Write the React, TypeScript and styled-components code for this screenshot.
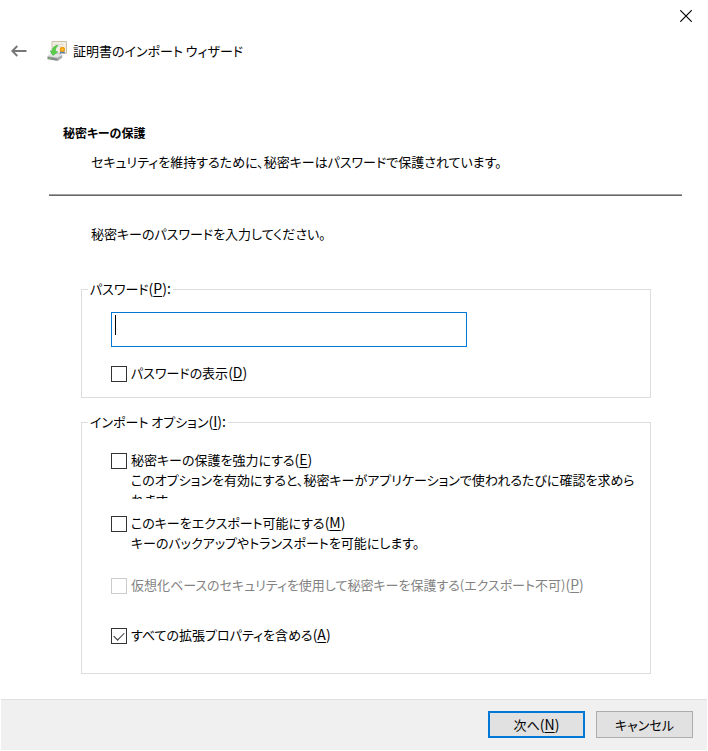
import React, { useState } from "react";
import styled, { createGlobalStyle } from "styled-components";

const GlobalStyle = createGlobalStyle`
  *, *::before, *::after { box-sizing: border-box; }
  body {
    margin: 0;
    background: #fff;
    color: #000;
    font: 13px/20px "Noto Sans CJK JP", sans-serif;
    font-feature-settings: "palt";
  }
  button, input { font: inherit; font-feature-settings: inherit; color: inherit; }
`;

const Wizard = styled.div`
  display: flex;
  flex-direction: column;
  min-height: 100vh;
  padding: 0 1px 1px;
`;

const TitleBar = styled.div`
  display: flex;
  justify-content: flex-end;
  height: 32px;
`;

const IconButton = styled.button<{ $width: number }>`
  display: flex;
  align-items: center;
  justify-content: center;
  width: ${(p) => p.$width}px;
  height: 32px;
  padding: 0;
  border: 0;
  background: none;
`;

const Header = styled.header`
  display: flex;
  align-items: center;
  height: 38px;
  padding-left: 2px;
`;

const Title = styled.h1`
  margin: 0 0 0 6px;
  font-size: 13px;
  font-weight: 400;
`;

const WizardIcon = styled.svg`
  margin-left: 13px;
`;

const Main = styled.main`
  flex: 1;
  padding: 53px 25px 25px 48px;
`;

const Intro = styled.div`
  padding: 0 0 22px 14px;
  border-bottom: 1px solid #a0a0a0;
  box-shadow: 0 1px #696969;
`;

const Heading = styled.h2`
  margin: 0 0 9px;
  font-size: 12px;
  font-weight: 700;
`;

const Text = styled.p<{ $indent: number }>`
  margin: 0;
  padding-left: ${(p) => p.$indent}px;
`;

const Body = styled.div`
  padding: 29px 31px 0 32px;
`;

const Group = styled.fieldset<{ $gap: number; $top: number; $bottom: number }>`
  min-width: 0;
  margin: ${(p) => p.$gap}px 0 0;
  padding: ${(p) => p.$top}px 13px ${(p) => p.$bottom}px 29px;
  border: 1px solid #dcdcdc;
`;

const Legend = styled.legend`
  margin-left: -23px;
  padding: 0 2px;
`;

const PasswordBox = styled.div`
  position: relative;
  max-width: 356px;
  height: 35px;
  margin-bottom: 16px;
`;

const PasswordInput = styled.input`
  display: block;
  width: 100%;
  height: 35px;
  padding: 2px 6px;
  border: 1px solid #0078d7;
  border-radius: 0;
  background: #fff;
  outline: 0;
  caret-color: transparent;
`;

const Caret = styled.span`
  position: absolute;
  left: 4px;
  top: 3px;
  width: 1px;
  height: 20px;
  background: #000;
`;

const Option = styled.div<{ $gap?: number }>`
  margin-top: ${(p) => p.$gap ?? 0}px;
`;

const OptionLabel = styled.label<{ $disabled?: boolean }>`
  display: flex;
  align-items: center;
  gap: 4px;
  height: 20px;
  color: ${(p) => (p.$disabled ? "#838383" : "#000")};
`;

const Checkbox = styled.input`
  appearance: none;
  display: grid;
  place-items: center;
  flex: none;
  width: 16px;
  height: 16px;
  margin: 2px 0 0;
  border: 1px solid #333;
  background: #fff;

  &:disabled { border-color: #ccc; }
  &:checked::before {
    content: "";
    width: 10px;
    height: 6px;
    margin-top: -3px;
    border: solid #333;
    border-width: 0 0 1px 1px;
    transform: rotate(-45deg);
  }
`;

const Description = styled.p<{ $clipped?: boolean }>`
  margin: 0;
  padding-left: 20px;
  max-height: ${(p) => (p.$clipped ? "29px" : "none")};
  overflow: hidden;
`;

const Footer = styled.footer`
  display: flex;
  justify-content: flex-end;
  gap: 11px;
  padding: 11px 14px 12px;
  border-top: 1px solid #dfdfdf;
  background: #f0f0f0;
`;

const FooterButton = styled.button<{ $primary?: boolean }>`
  width: 97px;
  height: 27px;
  padding: 0;
  border: ${(p) => (p.$primary ? "2px solid #0078d7" : "1px solid #adadad")};
  background: #e1e1e1;
  line-height: 20px;
`;

const KeyHint = styled.span`
  font-size: 14px;
  line-height: 1;

  u {
    text-decoration-thickness: 1px;
    text-underline-offset: 2px;
  }
`;

function AccessKey({ letter, suffix = "" }: { letter: string; suffix?: string }) {
  return <KeyHint>(<u>{letter}</u>){suffix}</KeyHint>;
}

type CheckOptionProps = {
  label: string;
  accessKey: string;
  gap?: number;
  disabled?: boolean;
  initial?: boolean;
  description?: string;
  clipped?: boolean;
};

function CheckOption({ label, accessKey, gap, disabled, initial = false, description, clipped }: CheckOptionProps) {
  const [checked, setChecked] = useState(initial);
  return (
    <Option $gap={gap}>
      <OptionLabel $disabled={disabled}>
        <Checkbox type="checkbox" checked={checked} disabled={disabled} onChange={(e) => setChecked(e.target.checked)} />
        <span>{label}<AccessKey letter={accessKey} /></span>
      </OptionLabel>
      {description && <Description $clipped={clipped}>{description}</Description>}
    </Option>
  );
}

function CertificateIcon() {
  return (
    <WizardIcon width="20" height="20" viewBox="0 0 20 20" aria-hidden="true">
      <path d="M5 .5h14.5v11.8H5z" fill="#f3eee4" stroke="#cdbfa8" />
      <path d="M7.5 3.5h9M9 5.5h5" stroke="#dedbd5" />
      <path d="M13.4 9l-.4 3.8 2.4-1 2.4 1-.6-4z" fill="#3f74b8" />
      <circle cx="15.4" cy="8.4" r="2.6" fill="#ee9f10" />
      <circle cx="15.4" cy="8.4" r="1" fill="#ffc43c" />
      <path d="M.5 15.5 4 12.3h8.5l2.7 2.2v2.2L10.6 20 .5 18.3z" fill="#a9adad" />
      <path d="M.8 15.2 4 12.6h8.3l2.4 2-4.5 2.2z" fill="#e2e4e4" />
      <path d="M.7 15.8l9.7 1.6v2.2L.7 17.9z" fill="#858989" />
      <path d="M1.8 17.2l2 .3" stroke="#69db4a" />
      <path d="M10.5 4.2C7 5 5.2 7 5.1 10.2L3 9.8l3 4.6 4.8-3.6-2.3-.4c-.1-2.5.4-4.2 2.4-5.6z" fill="#58cf49" stroke="#35a832" strokeWidth=".5" />
    </WizardIcon>
  );
}

export default function App() {
  const [password, setPassword] = useState("");
  return (
    <>
      <GlobalStyle />
      <Wizard>
        <TitleBar>
          <IconButton $width={42} type="button" aria-label="閉じる">
            <svg width="12" height="12" viewBox="0 0 12 12">
              <path d="M.3.3l11.4 11.4M11.7.3.3 11.7" stroke="#000" strokeWidth="1.2" />
            </svg>
          </IconButton>
        </TitleBar>
        <Header>
          <IconButton $width={31} type="button" aria-label="戻る">
            <svg width="16" height="12" viewBox="0 0 16 12">
              <path d="M15.5 6H1.5M6.3 1 1.3 6l5 5" fill="none" stroke="#777" strokeWidth="1.9" />
            </svg>
          </IconButton>
          <CertificateIcon />
          <Title>証明書のインポート ウィザード</Title>
        </Header>
        <Main>
          <Intro>
            <Heading>秘密キーの保護</Heading>
            <Text $indent={28}>セキュリティを維持するために、秘密キーはパスワードで保護されています。</Text>
          </Intro>
          <Body>
            <Text $indent={10}>秘密キーのパスワードを入力してください。</Text>
            <Group $gap={35} $top={13} $bottom={14}>
              <Legend><label htmlFor="password">パスワード<AccessKey letter="P" suffix=":" /></label></Legend>
              <PasswordBox>
                <PasswordInput id="password" type="password" value={password} onChange={(e) => setPassword(e.target.value)} />
                {password === "" && <Caret />}
              </PasswordBox>
              <CheckOption label="パスワードの表示" accessKey="D" />
            </Group>
            <Group $gap={14} $top={18} $bottom={28}>
              <Legend>インポート オプション<AccessKey letter="I" suffix=":" /></Legend>
              <CheckOption
                label="秘密キーの保護を強力にする"
                accessKey="E"
                description="このオプションを有効にすると、秘密キーがアプリケーションで使われるたびに確認を求められます。"
                clipped
              />
              <CheckOption
                label="このキーをエクスポート可能にする"
                accessKey="M"
                gap={14}
                description="キーのバックアップやトランスポートを可能にします。"
              />
              <CheckOption
                label="仮想化ベースのセキュリティを使用して秘密キーを保護する(エクスポート不可)"
                accessKey="P"
                gap={22}
                disabled
              />
              <CheckOption label="すべての拡張プロパティを含める" accessKey="A" gap={30} initial />
            </Group>
          </Body>
        </Main>
        <Footer>
          <FooterButton $primary type="button">次へ<AccessKey letter="N" /></FooterButton>
          <FooterButton type="button">キャンセル</FooterButton>
        </Footer>
      </Wizard>
    </>
  );
}
